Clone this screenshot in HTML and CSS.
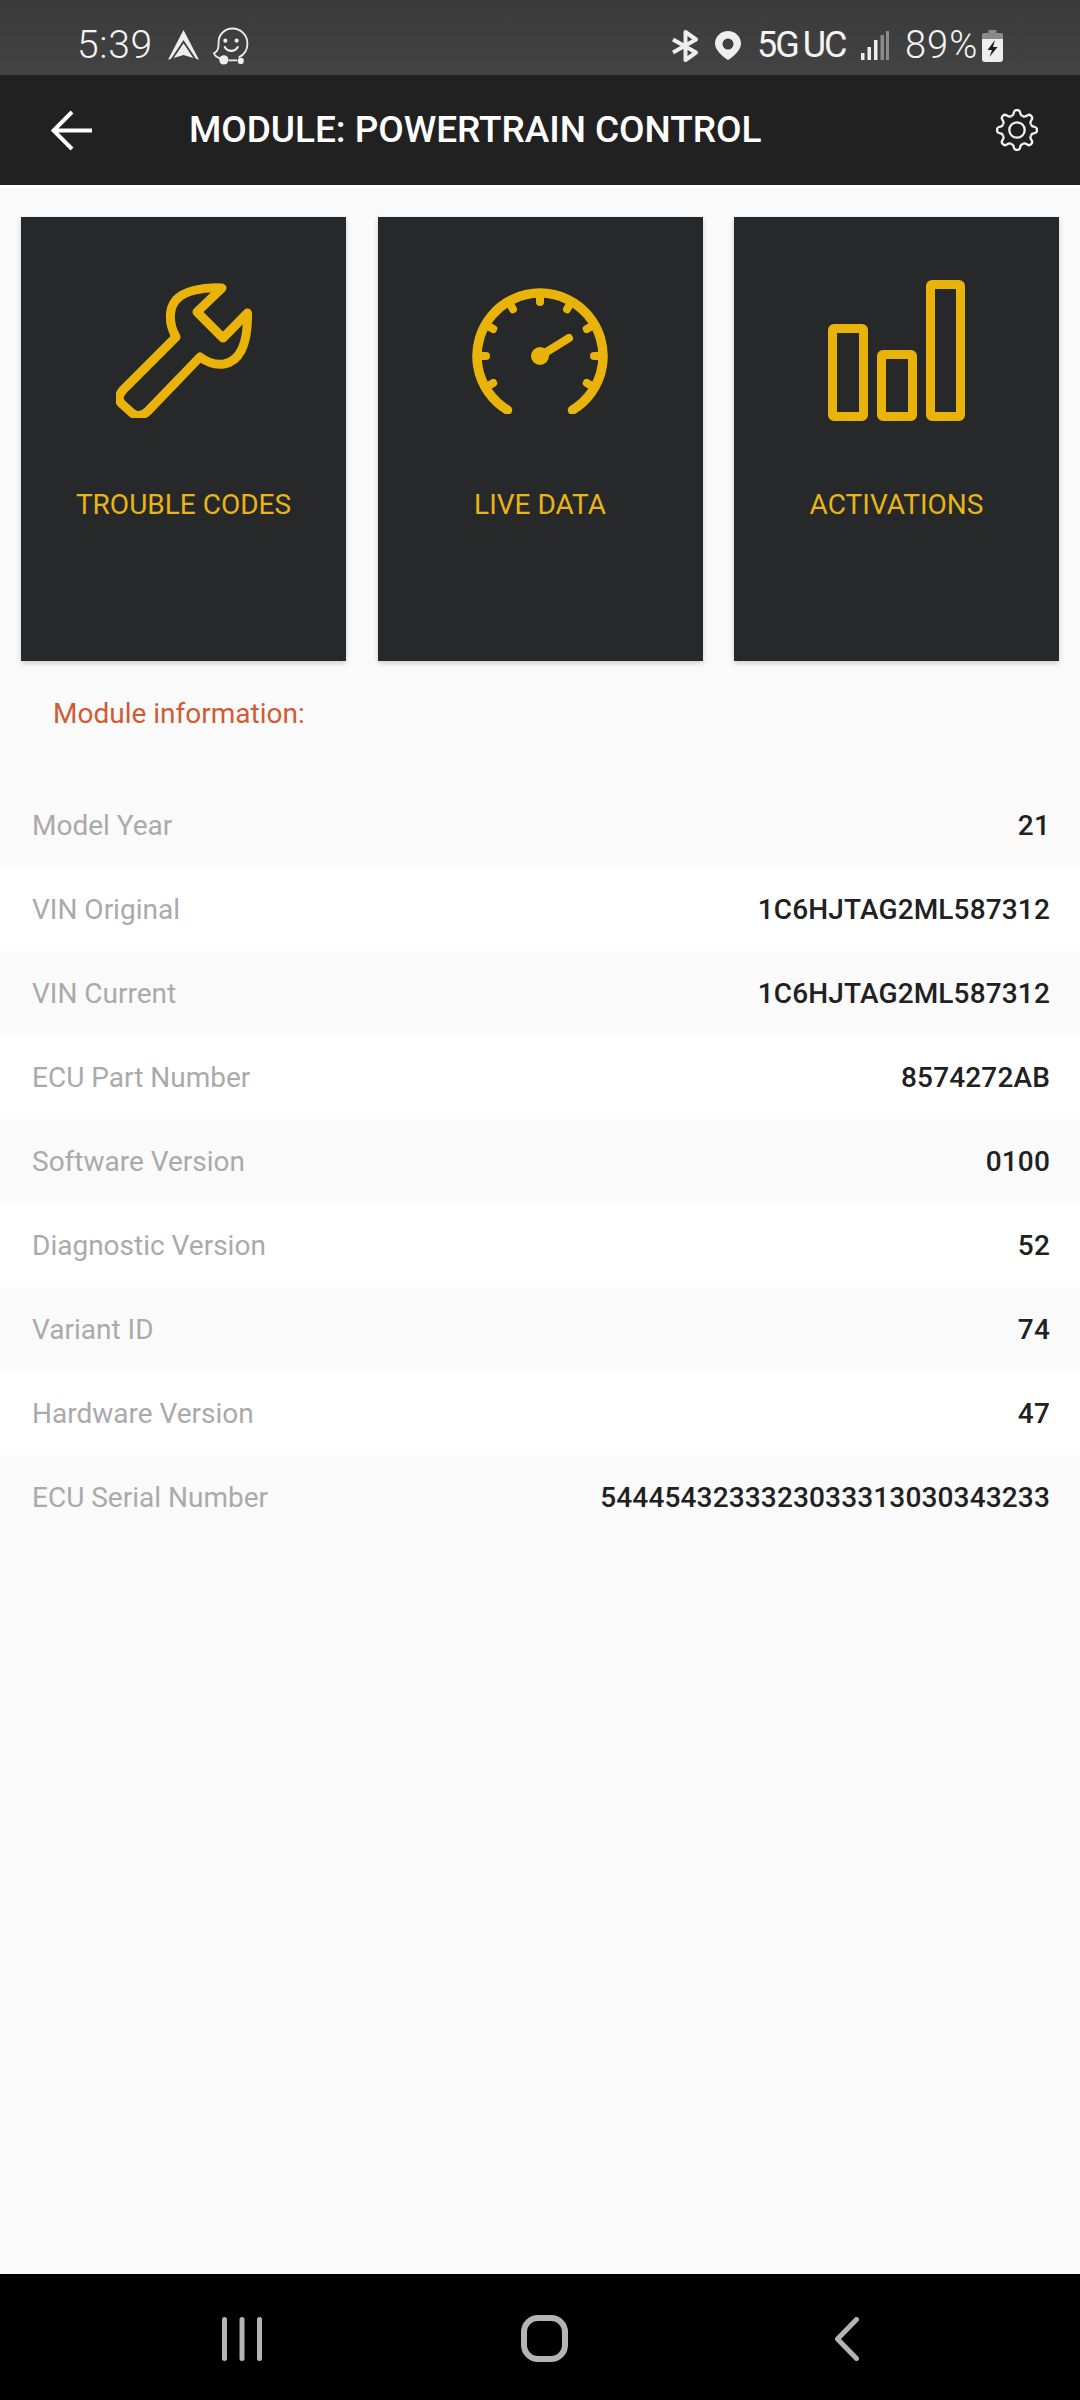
FILE: index.html
```html
<!DOCTYPE html>
<html lang="en">
<head>
<meta charset="utf-8">
<title>Module: Powertrain Control</title>
<link rel="stylesheet" href="styles.css">
</head>
<body>
<div class="app">
  <header class="status">
    <div class="status-left">
      <span class="time">5:39</span>
      <svg class="ic-auto" viewBox="0 0 29 30"><path d="M14.500 0 29 28 14.500 23.500 0 28Z" fill="#eee"/><path d="M3.500 27.500 14.500 11 25.500 27.500" fill="none" stroke="#404040" stroke-width="1.700"/></svg>
      <svg class="ic-waze" viewBox="0 0 37 37"><path d="M26 29.500C31.500 27 34.500 21.500 34.500 16 34.500 8 28 1.500 20 1.500 12.500 1.500 7 7 6.500 13.500 6.200 18 7 23.500 2 25.500 2.500 28 5.500 30 9 31M16 32.500H24.500" fill="none" stroke="#eee" stroke-width="1.800"/><circle cx="13" cy="13.300" r="2" fill="#eee"/><circle cx="24" cy="13.300" r="2" fill="#eee"/><path d="M12.500 19.500C15 24.500 22.500 24.500 25 19.500" fill="none" stroke="#eee" stroke-width="2" stroke-linecap="round"/><circle cx="11.500" cy="32" r="4.500" fill="#eee"/><circle cx="28" cy="33" r="3" fill="#eee"/></svg>
    </div>
    <div class="status-right">
      <svg class="ic-bt" viewBox="0 0 28 32"><path d="M2 9.500 25 22.500 14.500 30V2L25 9.500 2 22.500" fill="none" stroke="#eee" stroke-width="4" stroke-linejoin="round"/></svg>
      <svg class="ic-pin" viewBox="0 0 26 29"><path fill-rule="evenodd" d="M13 0C20 0 26 5.500 26 12.500 26 19 19 25 13 29 7 25 0 19 0 12.500 0 5.500 6 0 13 0ZM13 7.500A5.500 5.500 0 1 0 13 18.500 5.500 5.500 0 1 0 13 7.500Z" fill="#eee"/></svg>
      <span class="net"><span>5G</span><span>UC</span></span>
      <svg class="ic-signal" viewBox="0 0 28 29"><rect x="0" y="22" width="3.500" height="7" fill="#eee"/><rect x="6.500" y="16" width="3.500" height="13" fill="#eee"/><rect x="13" y="9" width="3.500" height="20" fill="#eee"/><rect x="19.500" y="4" width="3.500" height="25" fill="#8a8a8a"/><rect x="25" y="0" width="3" height="29" fill="#8a8a8a"/></svg>
      <span class="batt-pct">89%</span>
      <svg class="ic-batt" viewBox="0 0 21 32"><path d="M6.500 0H14.500V3H19Q21 3 21 5V9H0V5Q0 3 2 3H6.500Z" fill="#8a8a8a"/><path d="M0 9H21V29Q21 32 18 32H3Q0 32 0 29Z" fill="#eee"/><path d="M13 10 5.500 20H10L7.500 27 15.500 17H11Z" fill="#1c1c1c"/></svg>
    </div>
  </header>

  <nav class="toolbar">
    <svg class="ic-back" viewBox="0 0 41 41"><path d="M41 20.500H3M21 2 2.500 20.500 21 39" fill="none" stroke="#fff" stroke-width="4"/></svg>
    <h1 class="title">MODULE: POWERTRAIN CONTROL</h1>
    <svg class="ic-gear" viewBox="-21 -21 42 42">
      <g fill="none" stroke="#f2f2f2" stroke-width="2.300">
        <circle r="7.700"/>
        <path id="tooth" d="M-5.740-13.860Q-3.600-14.800-3.500-16L-3-18Q-2.500-20 0-20 2.500-20 3-18L3.500-16Q3.600-14.800 5.740-13.860"/>
        <use href="#tooth" transform="rotate(45)"/>
        <use href="#tooth" transform="rotate(90)"/>
        <use href="#tooth" transform="rotate(135)"/>
        <use href="#tooth" transform="rotate(180)"/>
        <use href="#tooth" transform="rotate(225)"/>
        <use href="#tooth" transform="rotate(270)"/>
        <use href="#tooth" transform="rotate(315)"/>
      </g>
    </svg>
  </nav>

  <main class="content">
    <section class="cards">
      <article class="card">
        <div class="card-icon">
          <svg class="ic-wrench" viewBox="0 0 136 135"><path d="M106 5C86 4 68 8 60 17 53 25 52 40 60 54L7 107C2 113 2 117 6 121L16 130C21 134 27 133 32 128L84 74C92 80 100 82 108 81 124 78 132 62 131.500 30L107 55 81 29Z" fill="none" stroke="#e9b30a" stroke-width="9" stroke-linejoin="round" stroke-linecap="round"/></svg>
        </div>
        <div class="card-label">TROUBLE CODES</div>
      </article>
      <article class="card">
        <div class="card-icon">
          <svg class="ic-gauge" viewBox="-68 -68 136 126">
            <g fill="none" stroke="#e9b30a" stroke-width="9.500" stroke-linecap="round">
              <path d="M-32.500 54A63 63 0 1 1 32.500 54"/>
              <g stroke-width="8">
                <path d="M0-62V-54"/><path d="M0-62V-54" transform="rotate(30)"/><path d="M0-62V-54" transform="rotate(60)"/><path d="M0-62V-54" transform="rotate(90)"/><path d="M0-62V-54" transform="rotate(120)"/><path d="M0-62V-54" transform="rotate(-30)"/><path d="M0-62V-54" transform="rotate(-60)"/><path d="M0-62V-54" transform="rotate(-90)"/><path d="M0-62V-54" transform="rotate(-120)"/>
              </g>
              <path d="M0 0 29-18" stroke-width="8"/>
            </g>
            <circle r="9" fill="#e9b30a"/>
          </svg>
        </div>
        <div class="card-label">LIVE DATA</div>
      </article>
      <article class="card">
        <div class="card-icon">
          <svg class="ic-bars" viewBox="0 0 137 141"><g fill="none" stroke="#e9b30a" stroke-width="9" stroke-linejoin="round"><rect x="4.500" y="48.500" width="31" height="88" rx="1.500"/><rect x="53.500" y="74.500" width="31" height="62" rx="1.500"/><rect x="102.500" y="4.500" width="30" height="132" rx="1.500"/></g></svg>
        </div>
        <div class="card-label">ACTIVATIONS</div>
      </article>
    </section>

    <h2 class="section-title">Module information:</h2>

    <ul class="rows">
      <li class="row"><span class="key">Model Year</span><span class="val">21</span></li>
      <li class="row"><span class="key">VIN Original</span><span class="val">1C6HJTAG2ML587312</span></li>
      <li class="row"><span class="key">VIN Current</span><span class="val">1C6HJTAG2ML587312</span></li>
      <li class="row"><span class="key">ECU Part Number</span><span class="val">8574272AB</span></li>
      <li class="row"><span class="key">Software Version</span><span class="val">0100</span></li>
      <li class="row"><span class="key">Diagnostic Version</span><span class="val">52</span></li>
      <li class="row"><span class="key">Variant ID</span><span class="val">74</span></li>
      <li class="row"><span class="key">Hardware Version</span><span class="val">47</span></li>
      <li class="row"><span class="key">ECU Serial Number</span><span class="val">5444543233323033313030343233</span></li>
    </ul>
  </main>

  <footer class="navbar">
    <svg class="ic-recents" viewBox="0 0 40 44"><path d="M2.500 2.500V41.500M20 2.500V41.500M37.500 2.500V41.500" fill="none" stroke="#b4b4b4" stroke-width="5" stroke-linecap="round"/></svg>
    <svg class="ic-home" viewBox="0 0 47 47"><rect x="3" y="3" width="41" height="41" rx="14" fill="none" stroke="#b4b4b4" stroke-width="6"/></svg>
    <svg class="ic-navback" viewBox="0 0 24 44"><path d="M21.500 2.500 2.500 22 21.500 41.500" fill="none" stroke="#b4b4b4" stroke-width="5" stroke-linecap="round" stroke-linejoin="round"/></svg>
  </footer>
</div>
</body>
</html>
```

FILE: styles.css
```css
* { box-sizing: border-box; }
html, body { margin: 0; padding: 0; }
body { font-family: Roboto, "Liberation Sans", sans-serif; background: #fafafa; }
svg { display: block; flex: none; }

.app { width: 1080px; height: 2400px; display: flex; flex-direction: column; overflow: hidden; }

.status { height: 75px; flex: none; background: linear-gradient(#3a3a3a, #434343); color: #f4f4f4; display: flex; align-items: center; justify-content: space-between; padding: 16px 77px 0 77px; }
.status-left, .status-right { display: flex; align-items: center; }
.time { font-size: 39px; font-weight: 300; line-height: 45px; letter-spacing: .7px; width: 91px; }
.ic-auto { width: 31px; height: 32px; }
.ic-waze { width: 38px; height: 38px; margin-left: 13px; }
.ic-bt { width: 28px; height: 32px; }
.ic-pin { width: 26px; height: 29px; margin-left: 16px; }
.net { display: flex; gap: 5px; width: 91px; margin-left: 16px; font-size: 36px; font-weight: 400; line-height: 45px; letter-spacing: -2px; }
.ic-signal { width: 28px; height: 29px; margin-left: 13px; }
.batt-pct { width: 77px; margin-left: 16px; font-size: 38px; font-weight: 300; line-height: 45px; letter-spacing: 1px; }
.ic-batt { width: 21px; height: 32px; }

.toolbar { height: 110px; flex: none; background: #212121; display: flex; align-items: center; padding: 0 42px 0 51px; }
.ic-back { width: 41px; height: 41px; }
.title { flex: 1; margin: 0 0 0 97px; font-size: 37px; font-weight: 500; line-height: 44px; letter-spacing: -.05px; color: #fff; white-space: nowrap; }
.ic-gear { width: 42px; height: 42px; }

.content { flex: 1; min-height: 0; background: #fafafa; padding-top: 32px; box-shadow: inset 0 3px 0 #fff; }

.cards { display: grid; grid-template-columns: repeat(3, 325px); column-gap: 31.5px; padding: 0 21px; }
.card { height: 444px; background: #26282a; box-shadow: 0 2px 5px rgba(0, 0, 0, .18); padding-top: 63px; display: flex; flex-direction: column; align-items: center; }
.card-icon { height: 141px; display: flex; align-items: center; justify-content: center; }
.ic-wrench { width: 136px; height: 135px; }
.ic-gauge { width: 136px; height: 126px; }
.ic-bars { width: 137px; height: 141px; }
.card-label { margin-top: 64px; font-size: 28px; font-weight: 400; line-height: 40px; color: #e8b416; white-space: nowrap; }

.section-title { margin: 33px 0 49px; padding-left: 53px; font-size: 28px; font-weight: 400; line-height: 40px; color: #d05c34; }

.rows { margin: 0; padding: 0; list-style: none; }
.row { height: 84px; display: flex; align-items: center; justify-content: space-between; padding: 2px 30px 0 32px; background: #fafafa; font-size: 28px; line-height: 40px; }
.row:nth-child(even) { background: #fff; }
.key { color: #aaaaaa; }
.val { color: #212121; font-weight: 500; letter-spacing: .15px; }

.navbar { height: 126px; flex: none; background: #000; display: grid; grid-template-columns: 222px 40px 259px 47px 267px 24px; align-items: center; padding-top: 3px; }
.ic-recents { grid-column: 2; width: 40px; height: 44px; }
.ic-home { grid-column: 4; width: 47px; height: 47px; }
.ic-navback { grid-column: 6; width: 24px; height: 44px; }
```
